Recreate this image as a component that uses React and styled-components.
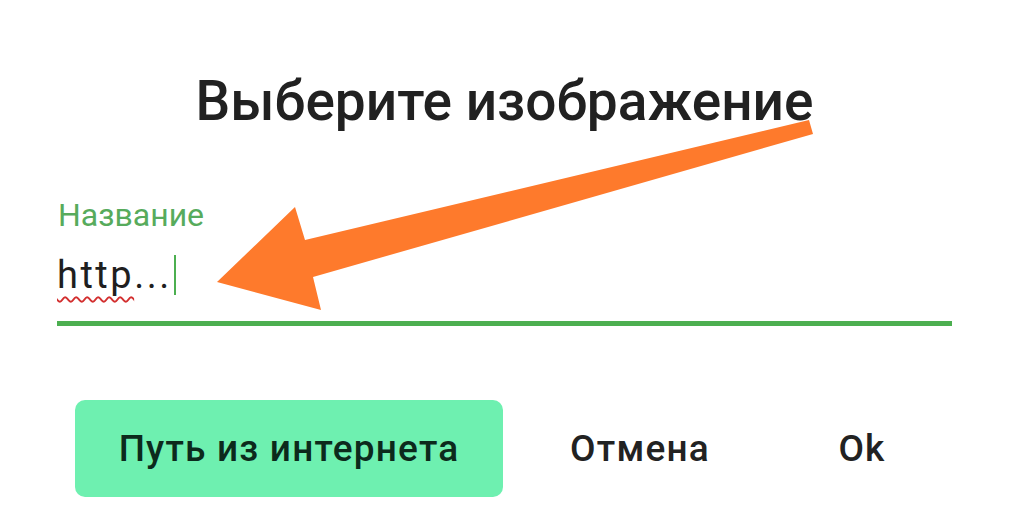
import React from 'react'
import styled, { createGlobalStyle } from 'styled-components'

const GlobalStyle = createGlobalStyle`
  html, body {
    margin: 0;
    padding: 0;
    background: #ffffff;
  }
  body {
    font-family: Roboto, "Noto Sans", "Liberation Sans", sans-serif;
  }
`

const Dialog = styled.div`
  position: relative;
  width: 1009px;
  height: 510px;
  overflow: hidden;
  background: #fff;
  display: flex;
  flex-direction: column;
`

const Title = styled.h1`
  margin: 74px 0 0;
  font-size: 55px;
  line-height: 1;
  font-weight: 500;
  color: #212121;
  text-align: center;
`

const Field = styled.div`
  margin: 70px 57px 0;
  display: flex;
  flex-direction: column;
`

const Label = styled.label`
  font-size: 32px;
  line-height: 1;
  color: #57ab5c;
  margin-left: 1px;
`

const InputRow = styled.div`
  margin-top: 25px;
  display: flex;
  align-items: center;
  font-size: 38px;
  line-height: 1;
  letter-spacing: 2.5px;
  color: #1f1f1f;
  height: 38px;
`

const Misspelled = styled.span`
  text-decoration: underline wavy #d32f2f;
  text-decoration-thickness: 2px;
  text-underline-offset: 8px;
`

const Caret = styled.span`
  display: inline-block;
  width: 2px;
  height: 40px;
  margin-left: 2px;
  background: #4caf50;
`

const Underline = styled.div`
  margin-top: 27px;
  height: 5px;
  background: #4caf50;
`

const Actions = styled.div`
  margin: 74px 0 0 75px;
  display: flex;
  align-items: center;
`

const Button = styled.button`
  border: none;
  font-family: inherit;
  font-size: 37px;
  font-weight: 500;
  letter-spacing: 1.2px;
  cursor: pointer;
  height: 97px;
  border-radius: 10px;
  color: ${p => (p.$primary ? '#0c2a1c' : '#222')};
  background: ${p => (p.$primary ? '#6ef0b0' : 'transparent')};
  width: ${p => p.$width}px;
  padding: 0;
`

const Arrow = styled.svg`
  position: absolute;
  left: 0;
  top: 0;
  pointer-events: none;
`

export default function App() {
  return (
    <>
      <GlobalStyle />
      <Dialog>
        <Title>Выберите изображение</Title>
        <Field>
          <Label>Название</Label>
          <InputRow>
            <Misspelled>http</Misspelled>...
            <Caret />
          </InputRow>
          <Underline />
        </Field>
        <Actions>
          <Button $primary $width={428}>Путь из интернета</Button>
          <Button $width={274}>Отмена</Button>
          <Button $width={170}>Ok</Button>
        </Actions>
        <Arrow width="1009" height="510" viewBox="0 0 1009 510">
          <polygon
            points="217,282 295,207 305,240 809,120 813,134 313,277 321,310"
            fill="#fe7a2c"
          />
        </Arrow>
      </Dialog>
    </>
  )
}
